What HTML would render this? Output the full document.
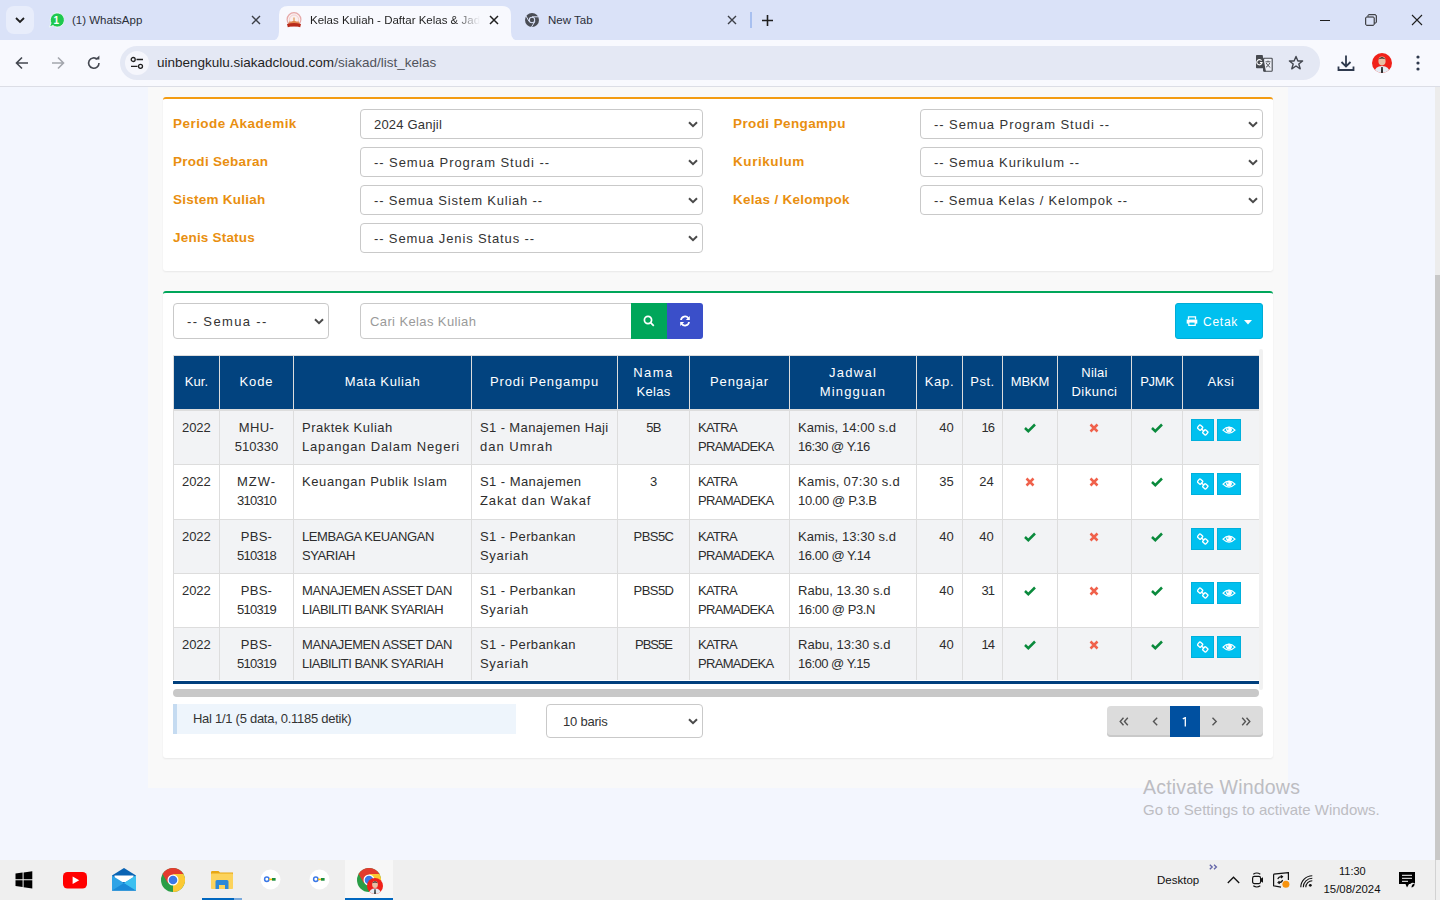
<!DOCTYPE html>
<html><head><meta charset="utf-8">
<style>
*{box-sizing:border-box;margin:0;padding:0}
html,body{width:1440px;height:900px;overflow:hidden;font-family:"Liberation Sans",sans-serif;background:#f3f6fe;position:relative}
.abs{position:absolute}
svg{display:block}
.tt{font-size:11.5px;line-height:16px;white-space:nowrap}
#tabs{left:0;top:0;width:1440px;height:40px;background:#dae2f8}
#toolbar{left:0;top:40px;width:1440px;height:47px;background:#f8f9fe;border-bottom:1px solid #dcdee6}
#omni{left:120px;top:46px;width:1200px;height:34px;border-radius:17px;background:#e4e8f4}
#page{left:0;top:87px;width:1440px;height:773px;background:#f3f6fe}
#grey{left:148px;top:87px;width:1140px;height:701px;background:#f9f9f9}
.card{background:#fff;border-radius:3px;box-shadow:0 1px 2px rgba(0,0,0,.07)}
#card1{left:163px;top:97px;width:1110px;height:174px;border-top:2px solid #f39c12}
#card2{left:163px;top:291px;width:1110px;height:467px;border-top:2px solid #00a65a}
#vscroll{left:1435px;top:87px;width:5px;height:773px;background:#ececec}
#vthumb{left:1435px;top:275px;width:5px;height:585px;background:#c8c8c8}
#taskbar{left:0;top:860px;width:1440px;height:40px;background:#efefef}
.lbl{font-size:13.5px;font-weight:bold;color:#e98f10;line-height:18px;white-space:nowrap;}
.sel{background:#fff;border:1px solid #c9c9c9;border-radius:4px}
.seltxt{font-size:13px;line-height:18px;color:#333;white-space:nowrap}
.inp{background:#fff;border:1px solid #c9c9c9;border-radius:4px 0 0 4px}
.ph{font-size:13px;line-height:18px;color:#9a9a9a;white-space:nowrap}
.btntxt{font-size:13px;line-height:18px;color:#fff;white-space:nowrap}
.th{background:#02437f;color:#fff;text-align:center;font-size:13px;line-height:18.57px}
.cell{overflow:hidden}
.td{position:absolute;left:8px;right:8px;top:8px;font-size:13px;line-height:18.57px;color:#2d2d2d;white-space:nowrap}
.td.c{text-align:center}.td.r{text-align:right}.td.l{text-align:left}
.abtn{background:#00c0ef;box-shadow:inset 0 0 0 1px #00b0dc}
.info{font-size:13px;line-height:18px;color:#333;white-space:nowrap}
.pgn{font-size:14px;line-height:29px;text-align:center;color:#555}
.pgn.act{background:#0050a0;color:#fff;line-height:31px}
</style></head><body>
<!-- TAB STRIP -->
<div id="tabs" class="abs">
  <div class="abs" style="left:6px;top:6px;width:28px;height:28px;border-radius:8px;background:#e8edfb"></div>
  <svg class="abs" style="left:14px;top:15px" width="12" height="10" viewBox="0 0 12 10"><path d="M2 3 L6 7 L10 3" fill="none" stroke="#1f1f1f" stroke-width="1.8"/></svg>
  <!-- whatsapp tab -->
  <svg class="abs" style="left:48px;top:12px" width="16" height="16" viewBox="0 0 16 16"><path d="M1.5 15 L3 11 A7 7 0 1 1 5 13.5 Z" fill="#1ec84e" stroke="#fff" stroke-width="0.8"/><text x="8.3" y="12" font-size="10" font-weight="bold" fill="#fff" text-anchor="middle" font-family="Liberation Sans">1</text></svg>
  <div class="abs tt" style="left:72px;top:12px;color:#2b2f38">(1) WhatsApp</div>
  <svg class="abs" style="left:251px;top:15px" width="10" height="10" viewBox="0 0 10 10"><path d="M1 1L9 9M9 1L1 9" stroke="#3c3f47" stroke-width="1.4"/></svg>
  <!-- active tab -->
  <svg class="abs" style="left:270px;top:6px" width="250" height="35" viewBox="0 0 250 35"><path d="M0 35 Q9 35 9 26 V9 Q9 0 18 0 H232 Q241 0 241 9 V26 Q241 35 250 35 Z" fill="#f8f9fe"/></svg>
  <svg class="abs" style="left:286px;top:12px" width="16" height="16" viewBox="0 0 16 16"><circle cx="8" cy="7.6" r="6.9" fill="#fbefef" stroke="#e6a8a8" stroke-width="1.2"/><circle cx="8" cy="7.6" r="4.6" fill="none" stroke="#f2cfcf" stroke-width="1"/><path d="M4.5 10.5 Q8 7.5 11.5 10.5Z" fill="#d8763a"/><rect x="7.3" y="5.5" width="1.4" height="4" fill="#e3a66a"/><path d="M3 9.5 H13 L13.5 12 H2.5Z" fill="#e07a40" opacity="0.8"/><path d="M1 12 Q8 10.2 15 12 L14.2 15.2 Q8 13.4 1.8 15.2Z" fill="#b82a1a"/></svg>
  <div class="abs tt" style="left:310px;top:12px;width:170px;overflow:hidden;white-space:nowrap;color:#1f1f1f;-webkit-mask-image:linear-gradient(90deg,#000 85%,transparent)">Kelas Kuliah - Daftar Kelas &amp; Jadwal</div>
  <svg class="abs" style="left:489px;top:15px" width="10" height="10" viewBox="0 0 10 10"><path d="M1 1L9 9M9 1L1 9" stroke="#1f1f1f" stroke-width="1.5"/></svg>
  <!-- new tab -->
  <svg class="abs" style="left:524px;top:12px" width="16" height="16" viewBox="0 0 16 16"><circle cx="8" cy="8" r="7" fill="#4a4d55"/><circle cx="8" cy="8" r="3.2" fill="#dae2f8"/><circle cx="8" cy="8" r="2.2" fill="#4a4d55"/><path d="M8 4.8 L14.6 4.8 M5.2 9.6 L2 4 M10.8 9.6 L7.5 15" stroke="#dae2f8" stroke-width="1"/></svg>
  <div class="abs tt" style="left:548px;top:12px;color:#2b2f38">New Tab</div>
  <svg class="abs" style="left:727px;top:15px" width="10" height="10" viewBox="0 0 10 10"><path d="M1 1L9 9M9 1L1 9" stroke="#3c3f47" stroke-width="1.4"/></svg>
  <div class="abs" style="left:750px;top:12px;width:2px;height:16px;background:#a8c0f0"></div>
  <svg class="abs" style="left:761px;top:14px" width="13" height="13" viewBox="0 0 13 13"><path d="M6.5 1V12M1 6.5H12" stroke="#1f1f1f" stroke-width="1.6"/></svg>
  <!-- window controls -->
  <div class="abs" style="left:1320px;top:20px;width:10px;height:1px;background:#1f1f1f"></div>
  <svg class="abs" style="left:1365px;top:14px" width="12" height="12" viewBox="0 0 12 12"><path d="M3 2.5 V1.5 Q3 0.7 3.8 0.7 H10 Q11.3 0.7 11.3 2 V8.2 Q11.3 9 10.5 9 H9.5" fill="none" stroke="#1f1f1f" stroke-width="1"/><rect x="0.7" y="3" width="8.5" height="8.3" rx="1" fill="none" stroke="#1f1f1f" stroke-width="1"/></svg>
  <svg class="abs" style="left:1411px;top:14px" width="12" height="12" viewBox="0 0 12 12"><path d="M1 1L11 11M11 1L1 11" stroke="#1f1f1f" stroke-width="1.1"/></svg>
</div>
<!-- TOOLBAR -->
<div id="toolbar" class="abs">
  <svg class="abs" style="left:14px;top:15px" width="16" height="16" viewBox="0 0 16 16"><path d="M14 8H2.5M8 2.5L2.5 8L8 13.5" fill="none" stroke="#434750" stroke-width="1.6"/></svg>
  <svg class="abs" style="left:50px;top:15px" width="16" height="16" viewBox="0 0 16 16"><path d="M2 8H13.5M8 2.5L13.5 8L8 13.5" fill="none" stroke="#a3a6ad" stroke-width="1.6"/></svg>
  <svg class="abs" style="left:86px;top:15px" width="16" height="16" viewBox="0 0 16 16"><path d="M13 8 A5.2 5.2 0 1 1 11.3 4.2" fill="none" stroke="#434750" stroke-width="1.6"/><path d="M9 4.5 L13.4 4.5 L13.4 0.5Z" fill="#434750"/></svg>
</div>
<div id="omni" class="abs">
  <div class="abs" style="left:5px;top:5px;width:24px;height:24px;border-radius:12px;background:#f5f6fc"></div>
  <svg class="abs" style="left:10px;top:10px" width="14" height="14" viewBox="0 0 14 14"><circle cx="3.2" cy="3.5" r="2" fill="none" stroke="#1f1f1f" stroke-width="1.3"/><path d="M6.5 3.5H13M1 10.3H7.5" stroke="#1f1f1f" stroke-width="1.3"/><circle cx="10.5" cy="10.3" r="2" fill="none" stroke="#1f1f1f" stroke-width="1.3"/></svg>
  <div class="abs" style="left:37px;top:9px;font-size:13.5px;color:#1f1f1f;white-space:nowrap">uinbengkulu.siakadcloud.com<span style="color:#50535b">/siakad/list_kelas</span></div>
  <!-- translate -->
  <svg class="abs" style="left:1136px;top:9px" width="17" height="17" viewBox="0 0 17 17"><rect x="7.6" y="3.3" width="8.6" height="12.9" rx="0.8" fill="#eef0f7" stroke="#46494f" stroke-width="1.1"/><path d="M0.8 0 H6.6 L10 16.6 H7.8 L7 13.2 H0.8 Q0 13.2 0 12.4 V0.8 Q0 0 0.8 0Z" fill="#46494f"/><path d="M5.6 5.8 A2.6 2.6 0 1 0 6 7.6 H3.9" fill="none" stroke="#fff" stroke-width="1.1"/><path d="M9.5 6.8H14.5M12 5.6V6.8M10.2 8Q12 11 14.3 12.5M13.8 8Q12.5 11 10 12.2" fill="none" stroke="#46494f" stroke-width="0.9"/></svg>
  <svg class="abs" style="left:1168px;top:9px" width="16" height="16" viewBox="0 0 16 16"><path d="M8 1.5L9.9 6H14.6L10.8 9L12.2 13.8L8 11L3.8 13.8L5.2 9L1.4 6H6.1Z" fill="none" stroke="#434750" stroke-width="1.4" stroke-linejoin="round"/></svg>
</div>
<svg class="abs" style="left:1337px;top:54px" width="18" height="18" viewBox="0 0 18 18"><path d="M9 1.5V12M4.5 8L9 12.5L13.5 8" fill="none" stroke="#2f3a4e" stroke-width="1.8"/><path d="M1.5 12.5V16H16.5V12.5" fill="none" stroke="#2f3a4e" stroke-width="1.8"/></svg>
<svg class="abs" style="left:1372px;top:53px" width="20" height="20" viewBox="0 0 20 20"><defs><clipPath id="av"><circle cx="10" cy="10" r="10"/></clipPath></defs><g clip-path="url(#av)"><rect width="20" height="20" fill="#f0211a"/><ellipse cx="10" cy="8" rx="3.6" ry="4.4" fill="#e9c0a5"/><path d="M6.3 6.5 Q10 1.5 13.7 6.5 Q10 4.5 6.3 6.5" fill="#2a2220"/><path d="M2 20 Q3 13 10 13 Q17 13 18 20Z" fill="#e3ebf3"/><path d="M9.3 14 H10.7 L11 20 H9Z" fill="#1b1b1b"/></g></svg>
<svg class="abs" style="left:1415px;top:54px" width="6" height="18" viewBox="0 0 6 18"><circle cx="3" cy="3" r="1.6" fill="#2f3a4e"/><circle cx="3" cy="9" r="1.6" fill="#2f3a4e"/><circle cx="3" cy="15" r="1.6" fill="#2f3a4e"/></svg>
<div id="page" class="abs"></div>
<div id="grey" class="abs"></div>
<div id="card1" class="abs card"></div>
<div id="card2" class="abs card"></div>
<div id="vscroll" class="abs"></div>
<div id="vthumb" class="abs"></div>
<div class="abs lbl" style="left:173px;top:115px"><span style="letter-spacing:0.453px">Periode Akademik</span></div>
<div class="abs sel" style="left:360px;top:109px;width:343px;height:30px"><div class="abs seltxt " style="left:13px;top:6px"><span style="letter-spacing:0.205px">2024 Ganjil</span></div><svg class="abs" style="right:4px;top:11px" width="10" height="7" viewBox="0 0 10 7"><path d="M1 1.2L5 5.2L9 1.2" fill="none" stroke="#4a4a4a" stroke-width="2"/></svg></div>
<div class="abs lbl" style="left:173px;top:153px"><span style="letter-spacing:0.288px">Prodi Sebaran</span></div>
<div class="abs sel" style="left:360px;top:147px;width:343px;height:30px"><div class="abs seltxt " style="left:13px;top:6px"><span style="letter-spacing:0.94px">-- Semua Program Studi --</span></div><svg class="abs" style="right:4px;top:11px" width="10" height="7" viewBox="0 0 10 7"><path d="M1 1.2L5 5.2L9 1.2" fill="none" stroke="#4a4a4a" stroke-width="2"/></svg></div>
<div class="abs lbl" style="left:173px;top:191px"><span style="letter-spacing:0.254px">Sistem Kuliah</span></div>
<div class="abs sel" style="left:360px;top:185px;width:343px;height:30px"><div class="abs seltxt " style="left:13px;top:6px"><span style="letter-spacing:0.8px">-- Semua Sistem Kuliah --</span></div><svg class="abs" style="right:4px;top:11px" width="10" height="7" viewBox="0 0 10 7"><path d="M1 1.2L5 5.2L9 1.2" fill="none" stroke="#4a4a4a" stroke-width="2"/></svg></div>
<div class="abs lbl" style="left:173px;top:229px"><span style="letter-spacing:0.205px">Jenis Status</span></div>
<div class="abs sel" style="left:360px;top:223px;width:343px;height:30px"><div class="abs seltxt " style="left:13px;top:6px"><span style="letter-spacing:0.863px">-- Semua Jenis Status --</span></div><svg class="abs" style="right:4px;top:11px" width="10" height="7" viewBox="0 0 10 7"><path d="M1 1.2L5 5.2L9 1.2" fill="none" stroke="#4a4a4a" stroke-width="2"/></svg></div>
<div class="abs lbl" style="left:733px;top:115px"><span style="letter-spacing:0.396px">Prodi Pengampu</span></div>
<div class="abs sel" style="left:920px;top:109px;width:343px;height:30px"><div class="abs seltxt " style="left:13px;top:6px"><span style="letter-spacing:0.94px">-- Semua Program Studi --</span></div><svg class="abs" style="right:4px;top:11px" width="10" height="7" viewBox="0 0 10 7"><path d="M1 1.2L5 5.2L9 1.2" fill="none" stroke="#4a4a4a" stroke-width="2"/></svg></div>
<div class="abs lbl" style="left:733px;top:153px"><span style="letter-spacing:0.569px">Kurikulum</span></div>
<div class="abs sel" style="left:920px;top:147px;width:343px;height:30px"><div class="abs seltxt " style="left:13px;top:6px"><span style="letter-spacing:0.892px">-- Semua Kurikulum --</span></div><svg class="abs" style="right:4px;top:11px" width="10" height="7" viewBox="0 0 10 7"><path d="M1 1.2L5 5.2L9 1.2" fill="none" stroke="#4a4a4a" stroke-width="2"/></svg></div>
<div class="abs lbl" style="left:733px;top:191px"><span style="letter-spacing:0.273px">Kelas / Kelompok</span></div>
<div class="abs sel" style="left:920px;top:185px;width:343px;height:30px"><div class="abs seltxt " style="left:13px;top:6px"><span style="letter-spacing:0.833px">-- Semua Kelas / Kelompok --</span></div><svg class="abs" style="right:4px;top:11px" width="10" height="7" viewBox="0 0 10 7"><path d="M1 1.2L5 5.2L9 1.2" fill="none" stroke="#4a4a4a" stroke-width="2"/></svg></div>
<div class="abs sel" style="left:173px;top:303px;width:156px;height:36px"><div class="abs seltxt " style="left:13px;top:9px"><span style="letter-spacing:1.365px">-- Semua --</span></div><svg class="abs" style="right:4px;top:14px" width="10" height="7" viewBox="0 0 10 7"><path d="M1 1.2L5 5.2L9 1.2" fill="none" stroke="#4a4a4a" stroke-width="2"/></svg></div>
<div class="abs inp" style="left:360px;top:303px;width:272px;height:36px"><div class="abs ph" style="left:9px;top:9px"><span style="letter-spacing:0.388px">Cari Kelas Kuliah</span></div></div>
<div class="abs" style="left:631px;top:303px;width:36px;height:36px;background:#00a65a"><svg class="abs" style="left:12px;top:12px" width="12" height="12" viewBox="0 0 12 12"><circle cx="5" cy="5" r="3.6" fill="none" stroke="#fff" stroke-width="1.7"/><path d="M7.6 7.6L10.8 10.8" stroke="#fff" stroke-width="1.7"/></svg></div>
<div class="abs" style="left:667px;top:303px;width:36px;height:36px;background:#3a4fc9;border-radius:0 3px 3px 0"><svg class="abs" style="left:12px;top:12px" width="12" height="12" viewBox="0 0 12 12"><path d="M2 5 A4 4 0 0 1 9.3 3.2" fill="none" stroke="#fff" stroke-width="1.8"/><path d="M10.8 1V5H6.8Z" fill="#fff"/><path d="M10 7 A4 4 0 0 1 2.7 8.8" fill="none" stroke="#fff" stroke-width="1.8"/><path d="M1.2 11V7H5.2Z" fill="#fff"/></svg></div>
<div class="abs" style="left:1175px;top:303px;width:88px;height:36px;background:#00c0ef;border:1px solid #00acd6;border-radius:3px"><svg class="abs" style="left:10px;top:12px" width="12" height="10" viewBox="0 0 12 10"><path d="M2.5 3.5V0.8H9.5V3.5" fill="none" stroke="#fff" stroke-width="1.3"/><rect x="0.7" y="3.6" width="10.6" height="4" fill="#fff"/><rect x="2.8" y="6" width="6.4" height="3.4" fill="#00c0ef" stroke="#fff" stroke-width="1.2"/></svg><div class="abs btntxt" style="left:27px;top:9px;font-size:12px"><span style="letter-spacing:0.75px">Cetak</span></div><svg class="abs" style="left:68px;top:16px" width="8" height="5" viewBox="0 0 8 5"><path d="M0 0H8L4 4.5Z" fill="#fff"/></svg></div>
<div class="abs" style="left:1259px;top:349px;width:4px;height:341px;background:#f1f1f1;border-radius:2px"></div>
<div class="abs" style="left:173px;top:355px;width:1086px;height:56px;background:#ddd"></div>
<div class="abs th" style="left:174px;top:356px;width:45px;height:53px"><div class="thin" style="padding-top:17px"><span style="letter-spacing:0.133px">Kur.</span></div></div>
<div class="abs th" style="left:220px;top:356px;width:73px;height:53px"><div class="thin" style="padding-top:17px"><span style="letter-spacing:0.883px">Kode</span></div></div>
<div class="abs th" style="left:294px;top:356px;width:177px;height:53px"><div class="thin" style="padding-top:17px"><span style="letter-spacing:0.635px">Mata Kuliah</span></div></div>
<div class="abs th" style="left:472px;top:356px;width:145px;height:53px"><div class="thin" style="padding-top:17px"><span style="letter-spacing:0.881px">Prodi Pengampu</span></div></div>
<div class="abs th" style="left:618px;top:356px;width:71px;height:53px"><div class="thin" style="padding-top:8px"><span style="letter-spacing:1.433px">Nama</span><br><span style="letter-spacing:0.325px">Kelas</span></div></div>
<div class="abs th" style="left:690px;top:356px;width:99px;height:53px"><div class="thin" style="padding-top:17px"><span style="letter-spacing:0.85px">Pengajar</span></div></div>
<div class="abs th" style="left:790px;top:356px;width:126px;height:53px"><div class="thin" style="padding-top:8px"><span style="letter-spacing:1.27px">Jadwal</span><br><span style="letter-spacing:1.157px">Mingguan</span></div></div>
<div class="abs th" style="left:917px;top:356px;width:45px;height:53px"><div class="thin" style="padding-top:17px"><span style="letter-spacing:0.75px">Kap.</span></div></div>
<div class="abs th" style="left:963px;top:356px;width:39px;height:53px"><div class="thin" style="padding-top:17px"><span style="letter-spacing:0.467px">Pst.</span></div></div>
<div class="abs th" style="left:1003px;top:356px;width:54px;height:53px"><div class="thin" style="padding-top:17px"><span style="letter-spacing:-0.133px">MBKM</span></div></div>
<div class="abs th" style="left:1058px;top:356px;width:73px;height:53px"><div class="thin" style="padding-top:8px"><span style="letter-spacing:0.2px">Nilai</span><br><span style="letter-spacing:0.483px">Dikunci</span></div></div>
<div class="abs th" style="left:1132px;top:356px;width:50px;height:53px"><div class="thin" style="padding-top:17px"><span style="letter-spacing:-0.25px">PJMK</span></div></div>
<div class="abs th" style="left:1183px;top:356px;width:76px;height:53px"><div class="thin" style="padding-top:17px"><span style="letter-spacing:0.55px">Aksi</span></div></div>
<div class="abs" style="left:173px;top:411px;width:1086px;height:270px;background:#ddd"></div>
<div class="abs cell" style="left:174px;top:411px;width:45px;height:53px;background:#f2f3f5"><div class="td l t0"><span style="letter-spacing:-0.067px">2022</span></div></div>
<div class="abs cell" style="left:220px;top:411px;width:73px;height:53px;background:#f2f3f5"><div class="td c t1"><span style="letter-spacing:0.417px">MHU-</span><br><span style="letter-spacing:0.02px">510330</span></div></div>
<div class="abs cell" style="left:294px;top:411px;width:177px;height:53px;background:#f2f3f5"><div class="td l t2"><span style="letter-spacing:0.492px">Praktek Kuliah</span><br><span style="letter-spacing:0.815px">Lapangan Dalam Negeri</span></div></div>
<div class="abs cell" style="left:472px;top:411px;width:145px;height:53px;background:#f2f3f5"><div class="td l t3"><span style="letter-spacing:0.378px">S1 - Manajemen Haji</span><br><span style="letter-spacing:0.988px">dan Umrah</span></div></div>
<div class="abs cell" style="left:618px;top:411px;width:71px;height:53px;background:#f2f3f5"><div class="td c t4"><span style="letter-spacing:-0.6px">5B</span></div></div>
<div class="abs cell" style="left:690px;top:411px;width:99px;height:53px;background:#f2f3f5"><div class="td l t5"><span style="letter-spacing:-0.65px">KATRA</span><br><span style="letter-spacing:-0.681px">PRAMADEKA</span></div></div>
<div class="abs cell" style="left:790px;top:411px;width:126px;height:53px;background:#f2f3f5"><div class="td l t6"><span style="letter-spacing:0.077px">Kamis, 14:00 s.d</span><br><span style="letter-spacing:-0.509px">16:30 @ Y.16</span></div></div>
<div class="abs cell" style="left:917px;top:411px;width:45px;height:53px;background:#f2f3f5"><div class="td r t7"><span style="letter-spacing:0.15px">40</span></div></div>
<div class="abs cell" style="left:963px;top:411px;width:39px;height:53px;background:#f2f3f5"><div class="td r t8"><span style="letter-spacing:-1.0px">16</span></div></div>
<div class="abs cell" style="left:1003px;top:411px;width:54px;height:53px;background:#f2f3f5"><div class="abs" style="left:21px;top:12px"><svg width="12" height="10" viewBox="0 0 12 10"><path d="M1 5L4.3 8.2L11 1.5" fill="none" stroke="#0a8a3c" stroke-width="2.5"/></svg></div></div>
<div class="abs cell" style="left:1058px;top:411px;width:73px;height:53px;background:#f2f3f5"><div class="abs" style="left:31px;top:12px"><svg width="10" height="10" viewBox="0 0 10 10"><path d="M1.5 1.5L8.5 8.5M8.5 1.5L1.5 8.5" stroke="#f0614b" stroke-width="2.5"/></svg></div></div>
<div class="abs cell" style="left:1132px;top:411px;width:50px;height:53px;background:#f2f3f5"><div class="abs" style="left:19px;top:12px"><svg width="12" height="10" viewBox="0 0 12 10"><path d="M1 5L4.3 8.2L11 1.5" fill="none" stroke="#0a8a3c" stroke-width="2.5"/></svg></div></div>
<div class="abs cell" style="left:1183px;top:411px;width:76px;height:53px;background:#f2f3f5"><div class="abs abtn" style="left:8px;top:8px;width:23px;height:22px"><svg class="abs" style="left:6px;top:5px" width="12" height="12" viewBox="0 0 12 12"><rect x="1" y="1.5" width="4.2" height="4.2" rx="1" transform="rotate(40 3.1 3.6)" fill="none" stroke="#fff" stroke-width="1.4"/><rect x="6.2" y="6.3" width="4.2" height="4.2" rx="1" transform="rotate(40 8.3 8.4)" fill="none" stroke="#fff" stroke-width="1.4"/><path d="M4.5 5L7 7.3" stroke="#fff" stroke-width="1.4"/></svg></div><div class="abs abtn" style="left:34px;top:8px;width:24px;height:22px"><svg class="abs" style="left:5px;top:6px" width="14" height="10" viewBox="0 0 14 10"><path d="M1 5.2Q7 -1.2 13 5.2Q7 11.2 1 5.2Z" fill="none" stroke="#fff" stroke-width="1.2"/><circle cx="7" cy="4.6" r="2.9" fill="#fff"/><path d="M5.8 3.2V5" stroke="#00c0ef" stroke-width="0.8"/></svg></div></div>
<div class="abs cell" style="left:174px;top:465px;width:45px;height:54px;background:#fff"><div class="td l t0"><span style="letter-spacing:-0.067px">2022</span></div></div>
<div class="abs cell" style="left:220px;top:465px;width:73px;height:54px;background:#fff"><div class="td c t1"><span style="letter-spacing:0.917px">MZW-</span><br><span style="letter-spacing:-0.7px">310310</span></div></div>
<div class="abs cell" style="left:294px;top:465px;width:177px;height:54px;background:#fff"><div class="td l t2"><span style="letter-spacing:0.588px">Keuangan Publik Islam</span></div></div>
<div class="abs cell" style="left:472px;top:465px;width:145px;height:54px;background:#fff"><div class="td l t3"><span style="letter-spacing:0.438px">S1 - Manajemen</span><br><span style="letter-spacing:0.907px">Zakat dan Wakaf</span></div></div>
<div class="abs cell" style="left:618px;top:465px;width:71px;height:54px;background:#fff"><div class="td c t4">3</div></div>
<div class="abs cell" style="left:690px;top:465px;width:99px;height:54px;background:#fff"><div class="td l t5"><span style="letter-spacing:-0.65px">KATRA</span><br><span style="letter-spacing:-0.681px">PRAMADEKA</span></div></div>
<div class="abs cell" style="left:790px;top:465px;width:126px;height:54px;background:#fff"><div class="td l t6"><span style="letter-spacing:0.323px">Kamis, 07:30 s.d</span><br><span style="letter-spacing:-0.337px">10.00 @ P.3.B</span></div></div>
<div class="abs cell" style="left:917px;top:465px;width:45px;height:54px;background:#fff"><div class="td r t7"><span style="letter-spacing:0.15px">35</span></div></div>
<div class="abs cell" style="left:963px;top:465px;width:39px;height:54px;background:#fff"><div class="td r t8"><span style="letter-spacing:0.15px">24</span></div></div>
<div class="abs cell" style="left:1003px;top:465px;width:54px;height:54px;background:#fff"><div class="abs" style="left:22px;top:12px"><svg width="10" height="10" viewBox="0 0 10 10"><path d="M1.5 1.5L8.5 8.5M8.5 1.5L1.5 8.5" stroke="#f0614b" stroke-width="2.5"/></svg></div></div>
<div class="abs cell" style="left:1058px;top:465px;width:73px;height:54px;background:#fff"><div class="abs" style="left:31px;top:12px"><svg width="10" height="10" viewBox="0 0 10 10"><path d="M1.5 1.5L8.5 8.5M8.5 1.5L1.5 8.5" stroke="#f0614b" stroke-width="2.5"/></svg></div></div>
<div class="abs cell" style="left:1132px;top:465px;width:50px;height:54px;background:#fff"><div class="abs" style="left:19px;top:12px"><svg width="12" height="10" viewBox="0 0 12 10"><path d="M1 5L4.3 8.2L11 1.5" fill="none" stroke="#0a8a3c" stroke-width="2.5"/></svg></div></div>
<div class="abs cell" style="left:1183px;top:465px;width:76px;height:54px;background:#fff"><div class="abs abtn" style="left:8px;top:8px;width:23px;height:22px"><svg class="abs" style="left:6px;top:5px" width="12" height="12" viewBox="0 0 12 12"><rect x="1" y="1.5" width="4.2" height="4.2" rx="1" transform="rotate(40 3.1 3.6)" fill="none" stroke="#fff" stroke-width="1.4"/><rect x="6.2" y="6.3" width="4.2" height="4.2" rx="1" transform="rotate(40 8.3 8.4)" fill="none" stroke="#fff" stroke-width="1.4"/><path d="M4.5 5L7 7.3" stroke="#fff" stroke-width="1.4"/></svg></div><div class="abs abtn" style="left:34px;top:8px;width:24px;height:22px"><svg class="abs" style="left:5px;top:6px" width="14" height="10" viewBox="0 0 14 10"><path d="M1 5.2Q7 -1.2 13 5.2Q7 11.2 1 5.2Z" fill="none" stroke="#fff" stroke-width="1.2"/><circle cx="7" cy="4.6" r="2.9" fill="#fff"/><path d="M5.8 3.2V5" stroke="#00c0ef" stroke-width="0.8"/></svg></div></div>
<div class="abs cell" style="left:174px;top:520px;width:45px;height:53px;background:#f2f3f5"><div class="td l t0"><span style="letter-spacing:-0.067px">2022</span></div></div>
<div class="abs cell" style="left:220px;top:520px;width:73px;height:53px;background:#f2f3f5"><div class="td c t1"><span style="letter-spacing:0.25px">PBS-</span><br><span style="letter-spacing:-0.7px">510318</span></div></div>
<div class="abs cell" style="left:294px;top:520px;width:177px;height:53px;background:#f2f3f5"><div class="td l t2"><span style="letter-spacing:-0.427px">LEMBAGA KEUANGAN</span><br><span style="letter-spacing:-0.433px">SYARIAH</span></div></div>
<div class="abs cell" style="left:472px;top:520px;width:145px;height:53px;background:#f2f3f5"><div class="td l t3"><span style="letter-spacing:0.396px">S1 - Perbankan</span><br><span style="letter-spacing:0.683px">Syariah</span></div></div>
<div class="abs cell" style="left:618px;top:520px;width:71px;height:53px;background:#f2f3f5"><div class="td c t4"><span style="letter-spacing:-0.562px">PBS5C</span></div></div>
<div class="abs cell" style="left:690px;top:520px;width:99px;height:53px;background:#f2f3f5"><div class="td l t5"><span style="letter-spacing:-0.65px">KATRA</span><br><span style="letter-spacing:-0.681px">PRAMADEKA</span></div></div>
<div class="abs cell" style="left:790px;top:520px;width:126px;height:53px;background:#f2f3f5"><div class="td l t6"><span style="letter-spacing:0.077px">Kamis, 13:30 s.d</span><br><span style="letter-spacing:-0.455px">16.00 @ Y.14</span></div></div>
<div class="abs cell" style="left:917px;top:520px;width:45px;height:53px;background:#f2f3f5"><div class="td r t7"><span style="letter-spacing:0.15px">40</span></div></div>
<div class="abs cell" style="left:963px;top:520px;width:39px;height:53px;background:#f2f3f5"><div class="td r t8"><span style="letter-spacing:0.15px">40</span></div></div>
<div class="abs cell" style="left:1003px;top:520px;width:54px;height:53px;background:#f2f3f5"><div class="abs" style="left:21px;top:12px"><svg width="12" height="10" viewBox="0 0 12 10"><path d="M1 5L4.3 8.2L11 1.5" fill="none" stroke="#0a8a3c" stroke-width="2.5"/></svg></div></div>
<div class="abs cell" style="left:1058px;top:520px;width:73px;height:53px;background:#f2f3f5"><div class="abs" style="left:31px;top:12px"><svg width="10" height="10" viewBox="0 0 10 10"><path d="M1.5 1.5L8.5 8.5M8.5 1.5L1.5 8.5" stroke="#f0614b" stroke-width="2.5"/></svg></div></div>
<div class="abs cell" style="left:1132px;top:520px;width:50px;height:53px;background:#f2f3f5"><div class="abs" style="left:19px;top:12px"><svg width="12" height="10" viewBox="0 0 12 10"><path d="M1 5L4.3 8.2L11 1.5" fill="none" stroke="#0a8a3c" stroke-width="2.5"/></svg></div></div>
<div class="abs cell" style="left:1183px;top:520px;width:76px;height:53px;background:#f2f3f5"><div class="abs abtn" style="left:8px;top:8px;width:23px;height:22px"><svg class="abs" style="left:6px;top:5px" width="12" height="12" viewBox="0 0 12 12"><rect x="1" y="1.5" width="4.2" height="4.2" rx="1" transform="rotate(40 3.1 3.6)" fill="none" stroke="#fff" stroke-width="1.4"/><rect x="6.2" y="6.3" width="4.2" height="4.2" rx="1" transform="rotate(40 8.3 8.4)" fill="none" stroke="#fff" stroke-width="1.4"/><path d="M4.5 5L7 7.3" stroke="#fff" stroke-width="1.4"/></svg></div><div class="abs abtn" style="left:34px;top:8px;width:24px;height:22px"><svg class="abs" style="left:5px;top:6px" width="14" height="10" viewBox="0 0 14 10"><path d="M1 5.2Q7 -1.2 13 5.2Q7 11.2 1 5.2Z" fill="none" stroke="#fff" stroke-width="1.2"/><circle cx="7" cy="4.6" r="2.9" fill="#fff"/><path d="M5.8 3.2V5" stroke="#00c0ef" stroke-width="0.8"/></svg></div></div>
<div class="abs cell" style="left:174px;top:574px;width:45px;height:53px;background:#fff"><div class="td l t0"><span style="letter-spacing:-0.067px">2022</span></div></div>
<div class="abs cell" style="left:220px;top:574px;width:73px;height:53px;background:#fff"><div class="td c t1"><span style="letter-spacing:0.25px">PBS-</span><br><span style="letter-spacing:-0.7px">510319</span></div></div>
<div class="abs cell" style="left:294px;top:574px;width:177px;height:53px;background:#fff"><div class="td l t2"><span style="letter-spacing:-0.425px">MANAJEMEN ASSET DAN</span><br><span style="letter-spacing:-0.538px">LIABILITI BANK SYARIAH</span></div></div>
<div class="abs cell" style="left:472px;top:574px;width:145px;height:53px;background:#fff"><div class="td l t3"><span style="letter-spacing:0.396px">S1 - Perbankan</span><br><span style="letter-spacing:0.683px">Syariah</span></div></div>
<div class="abs cell" style="left:618px;top:574px;width:71px;height:53px;background:#fff"><div class="td c t4"><span style="letter-spacing:-0.537px">PBS5D</span></div></div>
<div class="abs cell" style="left:690px;top:574px;width:99px;height:53px;background:#fff"><div class="td l t5"><span style="letter-spacing:-0.65px">KATRA</span><br><span style="letter-spacing:-0.681px">PRAMADEKA</span></div></div>
<div class="abs cell" style="left:790px;top:574px;width:126px;height:53px;background:#fff"><div class="td l t6"><span style="letter-spacing:0.043px">Rabu, 13.30 s.d</span><br><span style="letter-spacing:-0.405px">16:00 @ P3.N</span></div></div>
<div class="abs cell" style="left:917px;top:574px;width:45px;height:53px;background:#fff"><div class="td r t7"><span style="letter-spacing:0.15px">40</span></div></div>
<div class="abs cell" style="left:963px;top:574px;width:39px;height:53px;background:#fff"><div class="td r t8"><span style="letter-spacing:-1.0px">31</span></div></div>
<div class="abs cell" style="left:1003px;top:574px;width:54px;height:53px;background:#fff"><div class="abs" style="left:21px;top:12px"><svg width="12" height="10" viewBox="0 0 12 10"><path d="M1 5L4.3 8.2L11 1.5" fill="none" stroke="#0a8a3c" stroke-width="2.5"/></svg></div></div>
<div class="abs cell" style="left:1058px;top:574px;width:73px;height:53px;background:#fff"><div class="abs" style="left:31px;top:12px"><svg width="10" height="10" viewBox="0 0 10 10"><path d="M1.5 1.5L8.5 8.5M8.5 1.5L1.5 8.5" stroke="#f0614b" stroke-width="2.5"/></svg></div></div>
<div class="abs cell" style="left:1132px;top:574px;width:50px;height:53px;background:#fff"><div class="abs" style="left:19px;top:12px"><svg width="12" height="10" viewBox="0 0 12 10"><path d="M1 5L4.3 8.2L11 1.5" fill="none" stroke="#0a8a3c" stroke-width="2.5"/></svg></div></div>
<div class="abs cell" style="left:1183px;top:574px;width:76px;height:53px;background:#fff"><div class="abs abtn" style="left:8px;top:8px;width:23px;height:22px"><svg class="abs" style="left:6px;top:5px" width="12" height="12" viewBox="0 0 12 12"><rect x="1" y="1.5" width="4.2" height="4.2" rx="1" transform="rotate(40 3.1 3.6)" fill="none" stroke="#fff" stroke-width="1.4"/><rect x="6.2" y="6.3" width="4.2" height="4.2" rx="1" transform="rotate(40 8.3 8.4)" fill="none" stroke="#fff" stroke-width="1.4"/><path d="M4.5 5L7 7.3" stroke="#fff" stroke-width="1.4"/></svg></div><div class="abs abtn" style="left:34px;top:8px;width:24px;height:22px"><svg class="abs" style="left:5px;top:6px" width="14" height="10" viewBox="0 0 14 10"><path d="M1 5.2Q7 -1.2 13 5.2Q7 11.2 1 5.2Z" fill="none" stroke="#fff" stroke-width="1.2"/><circle cx="7" cy="4.6" r="2.9" fill="#fff"/><path d="M5.8 3.2V5" stroke="#00c0ef" stroke-width="0.8"/></svg></div></div>
<div class="abs cell" style="left:174px;top:628px;width:45px;height:52px;background:#f2f3f5"><div class="td l t0"><span style="letter-spacing:-0.067px">2022</span></div></div>
<div class="abs cell" style="left:220px;top:628px;width:73px;height:52px;background:#f2f3f5"><div class="td c t1"><span style="letter-spacing:0.25px">PBS-</span><br><span style="letter-spacing:-0.7px">510319</span></div></div>
<div class="abs cell" style="left:294px;top:628px;width:177px;height:52px;background:#f2f3f5"><div class="td l t2"><span style="letter-spacing:-0.425px">MANAJEMEN ASSET DAN</span><br><span style="letter-spacing:-0.538px">LIABILITI BANK SYARIAH</span></div></div>
<div class="abs cell" style="left:472px;top:628px;width:145px;height:52px;background:#f2f3f5"><div class="td l t3"><span style="letter-spacing:0.396px">S1 - Perbankan</span><br><span style="letter-spacing:0.683px">Syariah</span></div></div>
<div class="abs cell" style="left:618px;top:628px;width:71px;height:52px;background:#f2f3f5"><div class="td c t4"><span style="letter-spacing:-0.975px">PBS5E</span></div></div>
<div class="abs cell" style="left:690px;top:628px;width:99px;height:52px;background:#f2f3f5"><div class="td l t5"><span style="letter-spacing:-0.65px">KATRA</span><br><span style="letter-spacing:-0.681px">PRAMADEKA</span></div></div>
<div class="abs cell" style="left:790px;top:628px;width:126px;height:52px;background:#f2f3f5"><div class="td l t6"><span style="letter-spacing:0.043px">Rabu, 13:30 s.d</span><br><span style="letter-spacing:-0.509px">16:00 @ Y.15</span></div></div>
<div class="abs cell" style="left:917px;top:628px;width:45px;height:52px;background:#f2f3f5"><div class="td r t7"><span style="letter-spacing:0.15px">40</span></div></div>
<div class="abs cell" style="left:963px;top:628px;width:39px;height:52px;background:#f2f3f5"><div class="td r t8"><span style="letter-spacing:-1.0px">14</span></div></div>
<div class="abs cell" style="left:1003px;top:628px;width:54px;height:52px;background:#f2f3f5"><div class="abs" style="left:21px;top:12px"><svg width="12" height="10" viewBox="0 0 12 10"><path d="M1 5L4.3 8.2L11 1.5" fill="none" stroke="#0a8a3c" stroke-width="2.5"/></svg></div></div>
<div class="abs cell" style="left:1058px;top:628px;width:73px;height:52px;background:#f2f3f5"><div class="abs" style="left:31px;top:12px"><svg width="10" height="10" viewBox="0 0 10 10"><path d="M1.5 1.5L8.5 8.5M8.5 1.5L1.5 8.5" stroke="#f0614b" stroke-width="2.5"/></svg></div></div>
<div class="abs cell" style="left:1132px;top:628px;width:50px;height:52px;background:#f2f3f5"><div class="abs" style="left:19px;top:12px"><svg width="12" height="10" viewBox="0 0 12 10"><path d="M1 5L4.3 8.2L11 1.5" fill="none" stroke="#0a8a3c" stroke-width="2.5"/></svg></div></div>
<div class="abs cell" style="left:1183px;top:628px;width:76px;height:52px;background:#f2f3f5"><div class="abs abtn" style="left:8px;top:8px;width:23px;height:22px"><svg class="abs" style="left:6px;top:5px" width="12" height="12" viewBox="0 0 12 12"><rect x="1" y="1.5" width="4.2" height="4.2" rx="1" transform="rotate(40 3.1 3.6)" fill="none" stroke="#fff" stroke-width="1.4"/><rect x="6.2" y="6.3" width="4.2" height="4.2" rx="1" transform="rotate(40 8.3 8.4)" fill="none" stroke="#fff" stroke-width="1.4"/><path d="M4.5 5L7 7.3" stroke="#fff" stroke-width="1.4"/></svg></div><div class="abs abtn" style="left:34px;top:8px;width:24px;height:22px"><svg class="abs" style="left:5px;top:6px" width="14" height="10" viewBox="0 0 14 10"><path d="M1 5.2Q7 -1.2 13 5.2Q7 11.2 1 5.2Z" fill="none" stroke="#fff" stroke-width="1.2"/><circle cx="7" cy="4.6" r="2.9" fill="#fff"/><path d="M5.8 3.2V5" stroke="#00c0ef" stroke-width="0.8"/></svg></div></div>
<div class="abs" style="left:173px;top:680px;width:1086px;height:1px;background:#fff"></div>
<div class="abs" style="left:173px;top:681px;width:1086px;height:3px;background:#003f7d"></div>
<div class="abs" style="left:173px;top:689px;width:1086px;height:8px;background:#c8c8c8;border-radius:4px"></div>
<div class="abs" style="left:173px;top:704px;width:343px;height:30px;background:#eef5fc;border-left:4px solid #c5dbf1"><div class="abs info" style="left:16px;top:6px"><span style="letter-spacing:-0.276px">Hal 1/1 (5 data, 0.1185 detik)</span></div></div>
<div class="abs sel" style="left:546px;top:704px;width:157px;height:34px"><div class="abs seltxt " style="left:16px;top:8px"><span style="letter-spacing:-0.221px">10 baris</span></div><svg class="abs" style="right:4px;top:13px" width="10" height="7" viewBox="0 0 10 7"><path d="M1 1.2L5 5.2L9 1.2" fill="none" stroke="#4a4a4a" stroke-width="2"/></svg></div>
<div class="abs" style="left:1107px;top:706px;width:156px;height:31px;background:#dcdcdc;border-radius:4px;box-shadow:inset 0 -2px 0 #c9c9c9"></div>
<div class="abs" style="left:1170px;top:706px;width:30px;height:31px;background:#0050a0"></div>
<svg class="abs" style="left:1182px;top:717px" width="6" height="10" viewBox="0 0 6 10"><path d="M0.8 1.8L3.3 0.6V9.5" fill="none" stroke="#fff" stroke-width="1.3"/></svg>
<svg class="abs" style="left:1119px;top:717px" width="10" height="9" viewBox="0 0 10 9"><path d="M4.5 0.8L1.2 4.5L4.5 8.2M8.8 0.8L5.5 4.5L8.8 8.2" fill="none" stroke="#555" stroke-width="1.4"/></svg>
<svg class="abs" style="left:1152px;top:717px" width="7" height="9" viewBox="0 0 7 9"><path d="M5.2 0.8L1.5 4.5L5.2 8.2" fill="none" stroke="#555" stroke-width="1.4"/></svg>
<svg class="abs" style="left:1211px;top:717px" width="7" height="9" viewBox="0 0 7 9"><path d="M1.5 0.8L5.2 4.5L1.5 8.2" fill="none" stroke="#555" stroke-width="1.4"/></svg>
<svg class="abs" style="left:1241px;top:717px" width="10" height="9" viewBox="0 0 10 9"><path d="M1.2 0.8L4.5 4.5L1.2 8.2M5.5 0.8L8.8 4.5L5.5 8.2" fill="none" stroke="#555" stroke-width="1.4"/></svg>
<div class="abs" style="left:1143px;top:776px;font-size:19.5px;line-height:22px;letter-spacing:0.2px;color:#bdbdc2;white-space:nowrap">Activate Windows</div>
<div class="abs" style="left:1143px;top:801px;font-size:15px;line-height:18px;color:#bdbdc2;white-space:nowrap">Go to Settings to activate Windows.</div>
<div id="taskbar" class="abs">
  <!-- windows logo -->
  <svg class="abs" style="left:15px;top:11px" width="18" height="18" viewBox="0 0 18 18"><path d="M0.5 2.6L7.6 1.6V8.3H0.5Z M8.6 1.4L17.3 0.2V8.3H8.6Z M0.5 9.3H7.6V16L0.5 15Z M8.6 9.3H17.3V17.6L8.6 16.3Z" fill="#000"/></svg>
  <!-- youtube -->
  <svg class="abs" style="left:63px;top:12px" width="24" height="17" viewBox="0 0 24 17"><rect x="0" y="0" width="24" height="16.5" rx="4.5" fill="#f00"/><path d="M9.6 4.6L16.2 8.3L9.6 12Z" fill="#fff"/></svg>
  <!-- mail -->
  <svg class="abs" style="left:112px;top:8px" width="24" height="23" viewBox="0 0 24 23"><path d="M0 7.5L12 0L24 7.5V22.5H0Z" fill="#0a64b4"/><path d="M2.5 7.5H21.5V14H2.5Z" fill="#fff"/><path d="M0 7.5L12 15L24 7.5V22.5H0Z" fill="#2ea3e6"/><path d="M0 22.5L12 15L24 22.5Z" fill="#1a8ad8"/><path d="M12 15L24 7.5V22.5Z" fill="#3cc0f0"/></svg>
  <!-- chrome -->
  <svg class="abs" style="left:161px;top:8px" width="24" height="24" viewBox="0 0 24 24"><circle cx="12" cy="12" r="12" fill="#2a9d46"/><path d="M12 12L1.6 6A12 12 0 0 1 22.4 6Z" fill="#e33b2e"/><path d="M12 12L22.4 6A12 12 0 0 1 12 24Z" fill="#fcc934"/><path d="M12 6H22.4L17.2 15Z" fill="#fcc934"/><path d="M1.6 6L12 6L6.8 15Z" fill="#e33b2e"/><circle cx="12" cy="12" r="5.5" fill="#fff"/><circle cx="12" cy="12" r="4.3" fill="#3b78e7"/></svg>
  <!-- file explorer -->
  <svg class="abs" style="left:211px;top:11px" width="22" height="18" viewBox="0 0 22 18"><path d="M0 1.2Q0 0 1.2 0H7.5L9 1.6H22V4H0Z" fill="#e8a712"/><rect x="0" y="2.5" width="22" height="15.5" rx="0.8" fill="#fcd35c"/><path d="M4.5 18V10.5Q4.5 9 6 9H16Q17.5 9 17.5 10.5V18H14V14H8V18Z" fill="#2c88d8"/></svg>
  <div class="abs" style="left:202px;top:38px;width:32px;height:2px;background:#0067c0"></div>
  <div class="abs" style="left:234px;top:38px;width:8px;height:2px;background:#79a9dc"></div>
  <!-- key icons -->
  <svg class="abs" style="left:260px;top:9px" width="21" height="21" viewBox="0 0 21 21"><circle cx="10.5" cy="10.5" r="10" fill="#fff"/><circle cx="6.8" cy="10.3" r="2.2" fill="none" stroke="#3b78e7" stroke-width="1.5"/><rect x="9" y="9.6" width="3" height="1.6" fill="#fbbc04"/><rect x="12" y="9" width="3.6" height="2.7" fill="#1e8e3e"/></svg>
  <svg class="abs" style="left:309px;top:9px" width="21" height="21" viewBox="0 0 21 21"><circle cx="10.5" cy="10.5" r="10" fill="#fff"/><circle cx="6.8" cy="10.3" r="2.2" fill="none" stroke="#3b78e7" stroke-width="1.5"/><rect x="9" y="9.6" width="3" height="1.6" fill="#fbbc04"/><rect x="12" y="9" width="3.6" height="2.7" fill="#1e8e3e"/></svg>
  <!-- chrome profile -->
  <div class="abs" style="left:345px;top:0;width:48px;height:40px;background:#f7f7f7"></div>
  <div class="abs" style="left:345px;top:38px;width:48px;height:2px;background:#0067c0"></div>
  <svg class="abs" style="left:357px;top:8px" width="24" height="24" viewBox="0 0 24 24"><circle cx="12" cy="12" r="12" fill="#2a9d46"/><path d="M12 12L1.6 6A12 12 0 0 1 22.4 6Z" fill="#e33b2e"/><path d="M12 12L22.4 6A12 12 0 0 1 12 24Z" fill="#fcc934"/><path d="M12 6H22.4L17.2 15Z" fill="#fcc934"/><path d="M1.6 6L12 6L6.8 15Z" fill="#e33b2e"/><circle cx="12" cy="12" r="5.5" fill="#fff"/><circle cx="12" cy="12" r="4.3" fill="#3b78e7"/></svg>
  <svg class="abs" style="left:367px;top:18px" width="16" height="16" viewBox="0 0 20 20"><defs><clipPath id="av2"><circle cx="10" cy="10" r="10"/></clipPath></defs><g clip-path="url(#av2)"><rect width="20" height="20" fill="#f0211a"/><ellipse cx="10" cy="8" rx="3.6" ry="4.4" fill="#e9c0a5"/><path d="M6.3 6.5 Q10 1.5 13.7 6.5 Q10 4.5 6.3 6.5" fill="#2a2220"/><path d="M2 20 Q3 13 10 13 Q17 13 18 20Z" fill="#e3ebf3"/><path d="M9.3 14 H10.7 L11 20 H9Z" fill="#1b1b1b"/></g></svg>
  <!-- right tray -->
  <div class="abs" style="left:1157px;top:13px;font-size:11.5px;line-height:15px;color:#111;white-space:nowrap">Desktop</div>
  <svg class="abs" style="left:1209px;top:4px" width="9" height="6" viewBox="0 0 9 6"><path d="M0.8 0.8L3.2 3L0.8 5.2M5 0.8L7.4 3L5 5.2" fill="none" stroke="#6264a7" stroke-width="1.3"/></svg>
  <svg class="abs" style="left:1227px;top:16px" width="13" height="8" viewBox="0 0 13 8"><path d="M0.8 7L6.5 1.2L12.2 7" fill="none" stroke="#111" stroke-width="1.3"/></svg>
  <svg class="abs" style="left:1252px;top:12px" width="12" height="16" viewBox="0 0 12 16"><path d="M1.3 2.2Q4.8 -0.2 8.3 2.2M1.3 13.8Q4.8 16.2 8.3 13.8" fill="none" stroke="#111" stroke-width="1.1"/><rect x="0.6" y="4.4" width="8" height="7.2" rx="1.8" fill="none" stroke="#111" stroke-width="1.2"/><path d="M8.6 6.8L11 5.2V10.8L8.6 9.2Z" fill="#111"/></svg>
  <svg class="abs" style="left:1273px;top:12px" width="17" height="16" viewBox="0 0 17 16"><path d="M0.6 2.2L15.4 0.6V8M8 15.2L0.6 13.8V2.2" fill="none" stroke="#111" stroke-width="1.2"/><path d="M4.8 7.2Q5.5 4.6 8.6 4.6M7.8 3.4L9.6 4.6L8.2 6.2M9.6 8Q9 10.5 6 10.6M6.8 11.8L5 10.6L6.4 9" fill="none" stroke="#111" stroke-width="1.1"/><circle cx="12.9" cy="12.3" r="3.5" fill="#f7930e"/></svg>
  <svg class="abs" style="left:1300px;top:15px" width="13" height="13" viewBox="0 0 13 13"><path d="M0.8 12.3A11.5 11.5 0 0 1 12.3 0.8M3.3 12.3A9 9 0 0 1 12.3 3.3M5.8 12.3A6.5 6.5 0 0 1 12.3 5.8" fill="none" stroke="#111" stroke-width="1.1"/><circle cx="10.3" cy="10.3" r="1.4" fill="#111"/></svg>
  <div class="abs" style="left:1339px;top:4px;font-size:11px;line-height:14px;color:#111;white-space:nowrap">11:30</div>
  <div class="abs" style="left:1323.5px;top:22px;font-size:11.4px;line-height:14px;color:#111;white-space:nowrap">15/08/2024</div>
  <svg class="abs" style="left:1399px;top:12px" width="17" height="17" viewBox="0 0 17 17"><path d="M0 0H16V12H10L8 15.5L6.5 12H0Z" fill="#000"/><path d="M3 3.3H13M3 6.3H13M3 9.3H9" stroke="#fff" stroke-width="1"/><circle cx="13.8" cy="13.5" r="2.8" fill="#eee"/><path d="M12.5 15.5Q12.5 12 15.5 11.5Q16 14.5 12.5 15.5Z" fill="#000"/></svg>
  <div class="abs" style="left:1435px;top:0;width:1px;height:40px;background:#d2d2d2"></div>
</div>
</body></html>
